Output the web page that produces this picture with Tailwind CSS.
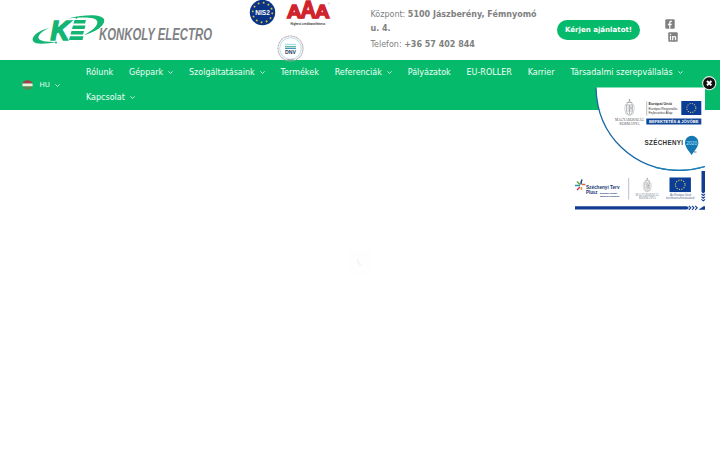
<!DOCTYPE html>
<html lang="hu">
<head>
  <meta charset="UTF-8">
  <meta name="viewport" content="width=device-width, initial-scale=1.0">
  <title>Konkoly Electro</title>
  <script src="https://cdn.jsdelivr.net/npm/@tailwindcss/browser@4"></script>
</head>
<body class="bg-white font-['DejaVu_Sans',sans-serif] h-[450px] overflow-hidden relative">
  <!-- Header -->
  <header class="h-[60px] flex text-[#808285]">
    <a href="#" class="w-[186px] ml-[30px] shrink-0">
      <svg class="w-[186px] h-[60px]" viewBox="30 0 186 60">
        <g fill="#13b573">
          <path d="M50 27.500C37 31 31 37 33 41C35 45 46 44 57 42C46 42 39 41 38.500 38C38 35 42 31 50 27.500Z"/>
          <path d="M68 18.500C86 14 101 14 104 19C106 25 96 32 84 35C93 30 99 25 97 21C95 17 84 17 68 18.500Z"/>
          <path d="M74.500 20h11.500l-1 3.500H73.500zM73 25.500h12.500l-1 3.500H72zM71.500 31h12.500l-1 3.500H70.500zM70 36.300h13.500l-1 3.700H69z"/>
          <circle cx="76.500" cy="17.800" r="1"/>
          <circle cx="56" cy="42.500" r="1"/>
          <text x="50.500" y="40" font-family="Liberation Sans" font-size="28" font-weight="bold" font-style="italic" stroke="#13b573" stroke-width="1.600" textLength="19" lengthAdjust="spacingAndGlyphs">K</text>
        </g>
        <text x="99" y="40.200" fill="#808184" font-family="Liberation Sans" font-size="16" font-weight="bold" font-style="italic" textLength="113" lengthAdjust="spacingAndGlyphs">KONKOLY ELECTRO</text>
      </svg>
    </a>

    <!-- Certificates -->
    <svg class="w-[90px] h-[60px] ml-[30px] shrink-0 overflow-visible" viewBox="246 0 90 60">
      <circle cx="262.500" cy="12.500" r="12.700" fill="#0b3486"/>
      <circle cx="262.500" cy="12.500" r="9.800" fill="none" stroke="#d9c544" stroke-width="1.700" stroke-dasharray="1.700 3.431"/>
      <text x="255.300" y="15" fill="#fff" font-family="Liberation Sans" font-size="7" font-weight="bold" textLength="14.500" lengthAdjust="spacingAndGlyphs">NIS2</text>
      <g fill="#d0232c" stroke="#d0232c" stroke-width="1.300" font-family="Liberation Sans" font-weight="bold">
        <text x="286.700" y="18" font-size="18" textLength="15" lengthAdjust="spacingAndGlyphs">A</text>
        <text x="314.700" y="18" font-size="18" textLength="15" lengthAdjust="spacingAndGlyphs">A</text>
        <text x="300.200" y="18" font-size="23" textLength="16" lengthAdjust="spacingAndGlyphs">A</text>
      </g>
      <circle cx="328.800" cy="3.500" r=".7" fill="none" stroke="#999" stroke-width=".3"/>
      <text x="290.500" y="24.500" fill="#333" font-family="Liberation Sans" font-size="3.300" font-weight="bold" textLength="35" lengthAdjust="spacingAndGlyphs">Highest creditworthiness</text>
      <circle cx="290.500" cy="48.500" r="12.500" fill="none" stroke="#b9a4a8" stroke-width="1.100" stroke-dasharray="1.100 .5"/>
      <circle cx="290.500" cy="48.500" r="10.800" fill="#fff" stroke="#9fd3e6" stroke-width=".8"/>
      <path d="M285 44.500h11" stroke="#a4dcec" stroke-width="1.300"/>
      <path d="M285 46.500h11" stroke="#62bd90" stroke-width="1"/>
      <path d="M285 48.300h11" stroke="#3d91bd" stroke-width="1.300"/>
      <text x="285" y="53.500" fill="#253c60" font-family="Liberation Sans" font-size="4.800" font-weight="bold" textLength="11" lengthAdjust="spacingAndGlyphs">DNV</text>
      <text x="287" y="59.800" fill="#946a71" font-family="Liberation Sans" font-size="2.500" textLength="7">ISO 9001</text>
    </svg>

    <div class="w-[176px] ml-[34.500px] pt-2 text-[8px] leading-[13.600px] text-[#808080]">
      <p>Központ: <strong>5100 Jászberény, Fémnyomó<br>u. 4.</strong></p>
      <p class="mt-[2.500px]">Telefon: <strong>+36 57 402 844</strong></p>
    </div>

    <a href="#" class="ml-[10.500px] mt-5 w-[83px] h-5 rounded-full bg-[#06ba6b] text-white text-[7.050px] font-bold flex items-center justify-center whitespace-nowrap">Kérjen ajánlatot!</a>

    <!-- Social links -->
    <div class="ml-[25px] mt-[18.500px] flex flex-col gap-[3px]">
      <svg class="size-[10px]" viewBox="0 0 19 19">
        <rect x=".5" y=".5" width="18" height="18" rx="2.500" fill="#808080"/>
        <path d="M8 18.500V12H5.500V9H8V7c0-3 1.500-4 5-3.500v2.300h-1.500c-1 0-1.300.500-1.300 1.400V9h2.700l-.5 3h-2.200v6.500z" fill="#fff"/>
      </svg>
      <svg class="size-[10px] ml-[3px]" viewBox="0 0 19 19">
        <rect x=".5" y=".5" width="18" height="18" rx="2" fill="#808080"/>
        <circle cx="4.800" cy="4.800" r="1.400" fill="#fff"/>
        <path d="M3.600 7.500H6v8H3.600zM7.800 7.500h2.300v1.100c1.500-2 5.500-1.600 5.500 2.300v4.600h-2.400v-4c0-2.800-3-2.500-3 0v4H7.800z" fill="#fff"/>
      </svg>
    </div>
  </header>

  <!-- Navigation -->
  <nav class="h-[50px] bg-[#06ba6b] text-[#effff7] flex text-[8px] leading-[25px] whitespace-nowrap">
    <div class="w-[64px] pl-[22px] flex items-center text-[7px] box-content shrink-0">
      <svg class="w-[11px] h-[10px]" viewBox="0 0 11 10">
        <clipPath id="flag"><ellipse cx="5.500" cy="5" rx="5.200" ry="4.800"/></clipPath>
        <g clip-path="url(#flag)"><path fill="#a83b49" d="M0 0h11v3.500H0z"/><path fill="#f0eeda" d="M0 3.500h11v3H0z"/><path fill="#5d8650" d="M0 6.500h11V10H0z"/></g>
      </svg>
      <span class="ml-[6.500px]">HU</span>
      <svg class="ml-[5.500px] w-[5px] h-[3px]" viewBox="0 0 5 3" fill="none" stroke="#effff7" stroke-width=".8"><path d="M.4.4l2.100 2 2.100-2"/></svg>
    </div>
    <ul class="flex flex-wrap gap-x-[15.900px] content-start">
      <li>Rólunk</li>
      <li class="flex items-center">Géppark <svg class="ml-[5px] w-[5px] h-[3px]" viewBox="0 0 5 3" fill="none" stroke="#effff7" stroke-width=".8"><path d="M.4.4l2.100 2 2.100-2"/></svg></li>
      <li class="flex items-center">Szolgáltatásaink <svg class="ml-[5px] w-[5px] h-[3px]" viewBox="0 0 5 3" fill="none" stroke="#effff7" stroke-width=".8"><path d="M.4.4l2.100 2 2.100-2"/></svg></li>
      <li>Termékek</li>
      <li class="flex items-center">Referenciák <svg class="ml-[5px] w-[5px] h-[3px]" viewBox="0 0 5 3" fill="none" stroke="#effff7" stroke-width=".8"><path d="M.4.4l2.100 2 2.100-2"/></svg></li>
      <li>Pályázatok</li>
      <li>EU-ROLLER</li>
      <li>Karrier</li>
      <li class="flex items-center">Társadalmi szerepvállalás <svg class="ml-[5px] w-[5px] h-[3px]" viewBox="0 0 5 3" fill="none" stroke="#effff7" stroke-width=".8"><path d="M.4.4l2.100 2 2.100-2"/></svg></li>
      <li class="flex items-center">Kapcsolat <svg class="ml-[5px] w-[5px] h-[3px]" viewBox="0 0 5 3" fill="none" stroke="#effff7" stroke-width=".8"><path d="M.4.4l2.100 2 2.100-2"/></svg></li>
    </ul>
  </nav>

  <!-- Preloader -->
  <div class="absolute left-[347px] top-[250px] w-[26px] h-[24px] bg-[#fefefe] flex items-center justify-center">
    <svg class="size-[10px]" viewBox="0 0 10 10"><path d="M4 1a4 4 0 0 0 4 7A5 5 0 0 1 4 1Z" fill="#f5f5f5"/></svg>
  </div>

  <!-- EU grant banners -->
  <svg class="absolute left-[570px] top-[72px] w-[150px] h-[140px]" viewBox="570 72 150 140">
    <defs>
      <g id="eu">
        <rect width="20" height="14" fill="#0b3c96"/>
        <circle cx="10" cy="7" r="4.500" fill="none" stroke="#cfc46a" stroke-width="1.100" stroke-dasharray="1.100 1.256"/>
      </g>
      <g id="crest" fill="none" stroke="#8c8f92" stroke-width=".6">
        <path d="M2 7h6v6q0 3-3 4-3-1-3-4zM2.500 7V4.500h5V7M3 4.500Q5 2 7 4.500M5 3V1M4 2h2M3 9h2M3 11h2M3 13h2M6.500 8v6M5.500 10h2M5 7v9"/>
        <path d="M1 6Q-1 11 1.500 16M9 6q2 5-.5 10M1.500 16q3.500 3 7 0" stroke="#b6b8ba"/>
      </g>
    </defs>

    <path d="M596 87.500h109v80.500A84.500 84.500 0 0 1 596 87.500Z" fill="#fff"/>
    <path d="M596 87.500C597 137 635 170.500 680 170.500Q693 170.500 705 166.500" fill="none" stroke="#1767a5" stroke-width="1.300"/>
    <use href="#crest" x="624.500" y="98"/>
    <g fill="#555" font-family="Liberation Serif" font-size="4.200">
      <text x="615" y="121.300" textLength="29" lengthAdjust="spacingAndGlyphs">MAGYARORSZÁG</text>
      <text x="619.500" y="125.300" textLength="20" lengthAdjust="spacingAndGlyphs">KORMÁNYA</text>
    </g>
    <path d="M646.700 101.500v14" stroke="#777" stroke-width=".5"/>
    <g fill="#333" font-family="Liberation Sans" font-size="3.700">
      <text x="648.500" y="104.900" font-weight="bold" textLength="23.500" lengthAdjust="spacingAndGlyphs">Európai Unió</text>
      <text x="648.500" y="109.500" textLength="29" lengthAdjust="spacingAndGlyphs">Európai Regionális</text>
      <text x="648.500" y="114.200" textLength="24" lengthAdjust="spacingAndGlyphs">Fejlesztési Alap</text>
    </g>
    <use href="#eu" x="681.300" y="101"/>
    <path fill="#124897" d="M646.300 118.500h55v6h-55z"/>
    <text x="649" y="123.200" fill="#fff" font-family="Liberation Sans" font-size="4.400" font-weight="bold" textLength="49.500" lengthAdjust="spacingAndGlyphs">BEFEKTETÉS A JÖVŐBE</text>
    <text x="644.500" y="145.200" fill="#333" font-family="Liberation Sans" font-size="6.300" font-weight="bold" textLength="38.500">SZÉCHENYI</text>
    <path d="M685 142.500a6.700 6.700 0 0 1 13.400 0c0 4-3 7-6.700 12.500-3.700-5-6.700-8.500-6.700-12.500Z" fill="#1678b3"/>
    <text x="686.300" y="144.500" fill="#a5e0f5" font-family="Liberation Sans" font-size="5" textLength="11">2020</text>
    <path d="M694 152h2.500" stroke="#555" stroke-width=".8"/>

    <!-- Széchenyi Terv Plusz -->
    <path d="M575 171h126v35H575z" fill="#fff"/>
    <path d="M655 167.500Q680 173.500 705 166.500" fill="none" stroke="#1d84ba" stroke-width="1.200"/>
    <path fill="#123c91" d="M701.500 171h3.500v21l-1.700 1.500-1.800-1.500zM575 206.200h112l2 1.800-2 1.600H575z"/>
    <path d="M688.800 205.800l2 2-2 2M692 205.800l2 2-2 2M695.200 205.800l2 2-2 2M701.500 194l1.800 1.500 1.700-1.500M701.500 196.700l1.800 1.500 1.700-1.500M701.500 199.300l1.800 1.500 1.700-1.500" fill="none" stroke="#123c91" stroke-width="1.100"/>
    <path d="M698.500 209.700l5-3.500H705v3.500z" fill="#123c91"/>
    <g fill="none" stroke-width="1.500">
      <path d="M575 185.500h5" stroke="#249aa8"/>
      <path d="M577 181.500l3 3" stroke="#62a83c"/>
      <path d="M581 184.500q0-3 1-5" stroke="#19407f"/>
      <path d="M582 184.500h3.500" stroke="#d56b41"/>
      <path d="M580 187l-3 3" stroke="#c7375c"/>
      <path d="M581.500 187v3" stroke="#e79c37"/>
    </g>
    <g fill="#163674" font-family="Liberation Sans" font-weight="bold">
      <text x="586" y="188.800" font-size="5" textLength="33.500" lengthAdjust="spacingAndGlyphs">Széchenyi Terv</text>
      <text x="586" y="194" font-size="5" textLength="11.500" lengthAdjust="spacingAndGlyphs">Plusz</text>
      <text x="600" y="193.500" font-size="2.500" textLength="17" lengthAdjust="spacingAndGlyphs">Építsük együtt</text>
      <text x="600" y="197" font-size="2.500" textLength="19.500" lengthAdjust="spacingAndGlyphs">Magyarországot!</text>
    </g>
    <path d="M628.700 178v21.500" stroke="#6e7fa5" stroke-width=".5"/>
    <use href="#crest" transform="translate(643 177) scale(.85)"/>
    <g fill="#777f91" font-family="Liberation Serif" font-size="3">
      <text x="635.500" y="196" textLength="23.500" lengthAdjust="spacingAndGlyphs">MAGYARORSZÁG</text>
      <text x="639" y="199" textLength="17" lengthAdjust="spacingAndGlyphs">KORMÁNYA</text>
    </g>
    <use href="#eu" transform="translate(669.500 177.500) scale(1.070 1.040)"/>
    <g fill="#53658c" font-family="Liberation Sans" font-size="2.700">
      <text x="670" y="196" textLength="21" lengthAdjust="spacingAndGlyphs">Az Európai Unió</text>
      <text x="666" y="199" textLength="28.500" lengthAdjust="spacingAndGlyphs">társfinanszírozásával</text>
    </g>

    <!-- Close button -->
    <circle cx="709.200" cy="83.200" r="6.600" fill="#111" stroke="#e3ece7" stroke-width="1.100"/>
    <path d="M707 81l4.400 4.400M711.400 81l-4.400 4.400" stroke="#fff" stroke-width="2"/>
  </svg>
</body>
</html>
